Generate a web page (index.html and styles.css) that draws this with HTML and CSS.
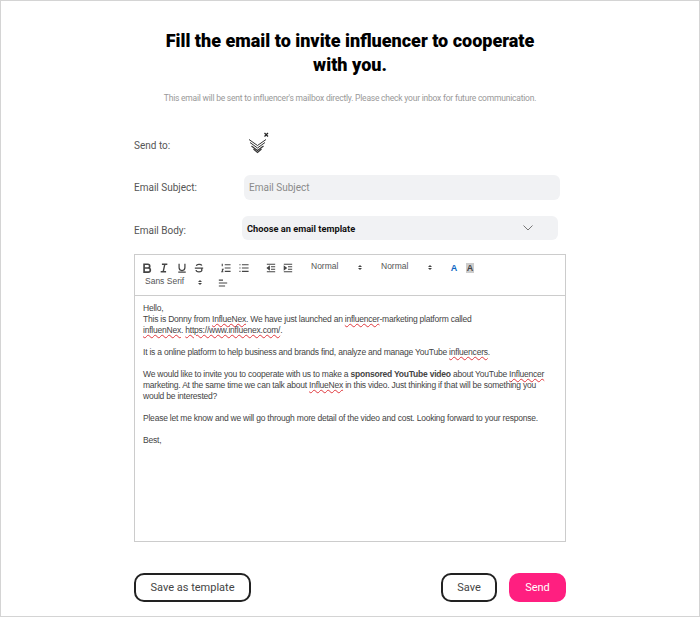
FILE: index.html
```html
<html>
    <head>
        <title>Invite influencer</title>
        <meta charset="utf-8">
        <link rel="stylesheet" href="styles.css">
    </head>
    <body>
        <div class="container">
            <h1 class="title">Fill the email to invite influencer to cooperate<br>with you.</h1>
            <p class="subtitle">This email will be sent to influencer's mailbox directly. Please check your inbox for future communication.</p>

            <div class="form-row send-row">
                <label class="row-label">Send to:</label>
                <div class="avatar">
                    <svg width="24" height="26" viewBox="0 0 24 26" fill="none" stroke="#333" stroke-width="1">
                        <path d="M1 9.5 L9.5 15.5 L18 9.5"/>
                        <path d="M2 12.5 L9.5 18 L17 12.5"/>
                        <path d="M3.5 16 L9.5 20.5 L15.5 16" stroke-width="1.2"/>
                        <path d="M5.5 19 L9.5 22.5 L13.5 19" stroke-width="1.2"/>
                        <path d="M16.5 3 L20 6.5 M20 3 L16.5 6.5" stroke="#222" stroke-width="1.2"/>
                    </svg>
                </div>
            </div>

            <div class="form-row subject-row">
                <label class="row-label">Email Subject:</label>
                <input class="subject-input" type="text" placeholder="Email Subject">
            </div>

            <div class="form-row body-row">
                <label class="row-label body-label">Email Body:</label>
                <div class="template-select">
                    <span>Choose an email template</span>
                    <svg width="10" height="6" viewBox="0 0 10 6" fill="none" stroke="#777" stroke-width="1"><path d="M0.5 0.5 L5 5 L9.5 0.5"/></svg>
                </div>
            </div>

            <div class="editor">
                <div class="toolbar">
                    <span class="tool"><svg width="10" height="10" viewBox="0 0 12 12" fill="none" stroke="#444" stroke-width="2"><path d="M2.5 1.5 H7 A2.2 2.2 0 0 1 7 6 H2.5 Z M2.5 6 H7.5 A2.5 2.5 0 0 1 7.5 11 H2.5 Z"/></svg></span>
                    <span class="tool"><svg width="10" height="10" viewBox="0 0 12 12" fill="none" stroke="#444" stroke-width="1.6"><path d="M3.5 1.5 H10 M2 10.5 H8.5 M7 1.5 L5 10.5"/></svg></span>
                    <span class="tool"><svg width="10" height="10" viewBox="0 0 12 12" fill="none" stroke="#444" stroke-width="1.5"><path d="M2.5 1 V5.5 A3.5 3.5 0 0 0 9.5 5.5 V1 M1.5 11 H10.5"/></svg></span>
                    <span class="tool tool-last"><svg width="10" height="10" viewBox="0 0 12 12" fill="none" stroke="#444" stroke-width="1.5"><path d="M9.5 3 A3.5 2.2 0 0 0 2.8 3.5 M2.5 8.5 A3.5 2.2 0 0 0 9.5 8.5 A2 2 0 0 0 8.8 6.8 M1 6 H11"/></svg></span>
                    <span class="tool"><svg width="10" height="10" viewBox="0 0 12 12" fill="none" stroke="#444" stroke-width="1.3"><path d="M4.5 2 H11.5 M4.5 6 H11.5 M4.5 10 H11.5 M1.5 1 V4 M1 7.5 H2.5 L1 10.5 H2.8"/></svg></span>
                    <span class="tool tool-last"><svg width="10" height="10" viewBox="0 0 12 12" fill="none" stroke="#444" stroke-width="1.3"><path d="M3.5 2 H11.5 M3.5 6 H11.5 M3.5 10 H11.5 M0.5 2 H1.8 M0.5 6 H1.8 M0.5 10 H1.8"/></svg></span>
                    <span class="tool"><svg width="10" height="10" viewBox="0 0 12 12" fill="none" stroke="#444" stroke-width="1.3"><path d="M1 1.5 H11 M6 4.5 H11 M6 7.5 H11 M1 10.5 H11"/><path d="M4 4 L1.5 6 L4 8 Z" fill="#444"/></svg></span>
                    <span class="tool"><svg width="10" height="10" viewBox="0 0 12 12" fill="none" stroke="#444" stroke-width="1.3"><path d="M1 1.5 H11 M6 4.5 H11 M6 7.5 H11 M1 10.5 H11"/><path d="M1.5 4 L4 6 L1.5 8 Z" fill="#444"/></svg></span>
                    <span class="picker"><span class="picker-label">Normal</span><span class="arrows"><i class="up"></i><i class="down"></i></span></span>
                    <span class="picker"><span class="picker-label">Normal</span><span class="arrows"><i class="up"></i><i class="down"></i></span></span>
                    <span class="color-a">A</span>
                    <span class="color-bg">A</span>
                    <span class="toolbar-break"></span>
                    <span class="picker font-picker"><span class="picker-label">Sans Serif</span><span class="arrows"><i class="up"></i><i class="down"></i></span></span>
                    <span class="tool align-tool"><svg width="10" height="10" viewBox="0 0 12 12" fill="none" stroke="#444" stroke-width="1.3"><path d="M1 2.5 H6 M1 6 H11 M1 9.5 H8.5"/></svg></span>
                </div>
                <div class="editor-body">
                    <p>Hello,<br>
                    This is Donny from <u>InflueNex</u>. We have just launched an <u>influencer</u>-marketing platform called<br>
                    <u>influenNex</u>. <u>https://www.influenex.com/</u>.</p>
                    <p>It is a online platform to help business and brands find, analyze and manage YouTube <u>influencers</u>.</p>
                    <p>We would like to invite you to cooperate with us to make a <b>sponsored YouTube video</b> about YouTube <u>Influencer</u><br>
                    marketing. At the same time we can talk about <u>InflueNex</u> in this video. Just thinking if that will be something you<br>
                    would be interested?</p>
                    <p>Please let me know and we will go through more detail of the video and cost. Looking forward to your response.</p>
                    <p>Best,</p>
                </div>
            </div>

            <div class="btnDiv">
                <button class="btn template-btn" type="button">Save as template</button>
                <div class="btn-right">
                    <button class="btn save-btn" type="button">Save</button>
                    <button class="btn send-btn" type="button">Send</button>
                </div>
            </div>
        </div>
    </body>
</html>
```

FILE: styles.css
```css
html,
body {
    margin: 0;
    height: 100%;
    background-color: white;
}
.container {
    box-sizing: border-box;
    height: 617px;
    padding: 28px 133px 0;
    border: 1px solid #d4d4d4;
    font-family: Roboto, sans-serif;
    color: #444;
}
.title {
    margin: 0 -20px;
    font-family: Roboto, sans-serif;
    font-size: 18px;
    font-weight: 900;
    line-height: 24px;
    text-align: center;
    color: #000;
}
.subtitle {
    margin: 15px -20px 0;
    font-size: 8.5px;
    letter-spacing: -0.22px;
    line-height: 12px;
    text-align: center;
    color: #999;
}
.form-row {
    display: flex;
    align-items: center;
}
.row-label {
    flex: none;
    width: 110px;
    font-size: 10px;
    color: #555;
}
.send-row {
    height: 34px;
    margin-top: 24px;
}
.avatar {
    display: flex;
    margin: -4px 0 0 4px;
}
.subject-row {
    margin-top: 13px;
}
.subject-input {
    box-sizing: border-box;
    width: 316px;
    height: 25px;
    padding: 0 5px;
    border: none;
    border-radius: 6px;
    background-color: #f1f2f4;
    font-family: Roboto, sans-serif;
    font-size: 10px;
}
.subject-input::placeholder {
    color: #8a8a8a;
}
.body-row {
    margin-top: 16px;
}
.body-label {
    width: 108px;
    padding-top: 4px;
}
.template-select {
    box-sizing: border-box;
    display: flex;
    align-items: center;
    justify-content: space-between;
    width: 316px;
    height: 24px;
    padding: 0 25px 0 5px;
    border-radius: 6px;
    background-color: #f1f2f4;
    font-size: 9.25px;
    font-weight: 700;
    color: #111;
}
.editor {
    box-sizing: border-box;
    height: 288px;
    margin-top: 14px;
    border: 1px solid #ccc;
}
.toolbar {
    box-sizing: border-box;
    display: flex;
    flex-wrap: wrap;
    align-items: center;
    align-content: flex-start;
    height: 41px;
    padding: 5px 0 0 3px;
    border-bottom: 1px solid #ccc;
}
.toolbar-break {
    flex-basis: 100%;
}
.tool {
    display: flex;
    align-items: center;
    justify-content: center;
    width: 17.5px;
    height: 15px;
}
.tool-last {
    margin-right: 9.5px;
}
.picker {
    display: flex;
    justify-content: space-between;
    align-items: center;
    box-sizing: border-box;
    width: 70px;
    height: 15px;
    padding-left: 14px;
    padding-right: 5px;
    font-family: "Liberation Sans", sans-serif;
    font-size: 8.5px;
    color: #555;
}
.picker-label {
    margin-bottom: 3px;
}
.arrows {
    display: flex;
    flex-direction: column;
    gap: 1px;
}
.arrows i {
    display: block;
    border-left: 2px solid transparent;
    border-right: 2px solid transparent;
}
.arrows .up {
    border-bottom: 2.5px solid #444;
}
.arrows .down {
    border-top: 2.5px solid #444;
}
.color-a {
    width: 17px;
    margin-left: 8.5px;
    font-family: "Liberation Sans", sans-serif;
    font-size: 9px;
    font-weight: 700;
    text-align: center;
    color: #0a66c2;
}
.color-bg {
    width: 8px;
    height: 10px;
    margin-left: 3.5px;
    background-color: #ccc;
    font-family: "Liberation Sans", sans-serif;
    font-size: 9px;
    font-weight: 700;
    line-height: 10px;
    text-align: center;
    color: #444;
}
.font-picker {
    padding-left: 7px;
    padding-right: 6px;
}
.align-tool {
    margin-left: 6px;
}
.editor-body {
    padding: 7px 8px;
    font-family: "Liberation Sans", sans-serif;
    font-size: 8.5px;
    letter-spacing: -0.22px;
    line-height: 11px;
    color: #444;
    white-space: nowrap;
}
.editor-body p {
    margin: 0 0 11px;
}
.editor-body u {
    text-decoration: underline wavy #e0393e 1px;
}
.btnDiv {
    display: flex;
    justify-content: space-between;
    margin-top: 31px;
}
.btn-right {
    display: flex;
    gap: 12px;
}
.btn {
    box-sizing: border-box;
    height: 29px;
    padding: 0;
    border: solid 2px #222;
    border-radius: 10px;
    background-color: white;
    font-family: Roboto, sans-serif;
    font-size: 11px;
    color: #444;
}
.template-btn {
    width: 117px;
}
.save-btn {
    width: 56px;
}
.send-btn {
    width: 57px;
    border-color: #ff1f80;
    background-color: #ff1f80;
    color: white;
}
```
